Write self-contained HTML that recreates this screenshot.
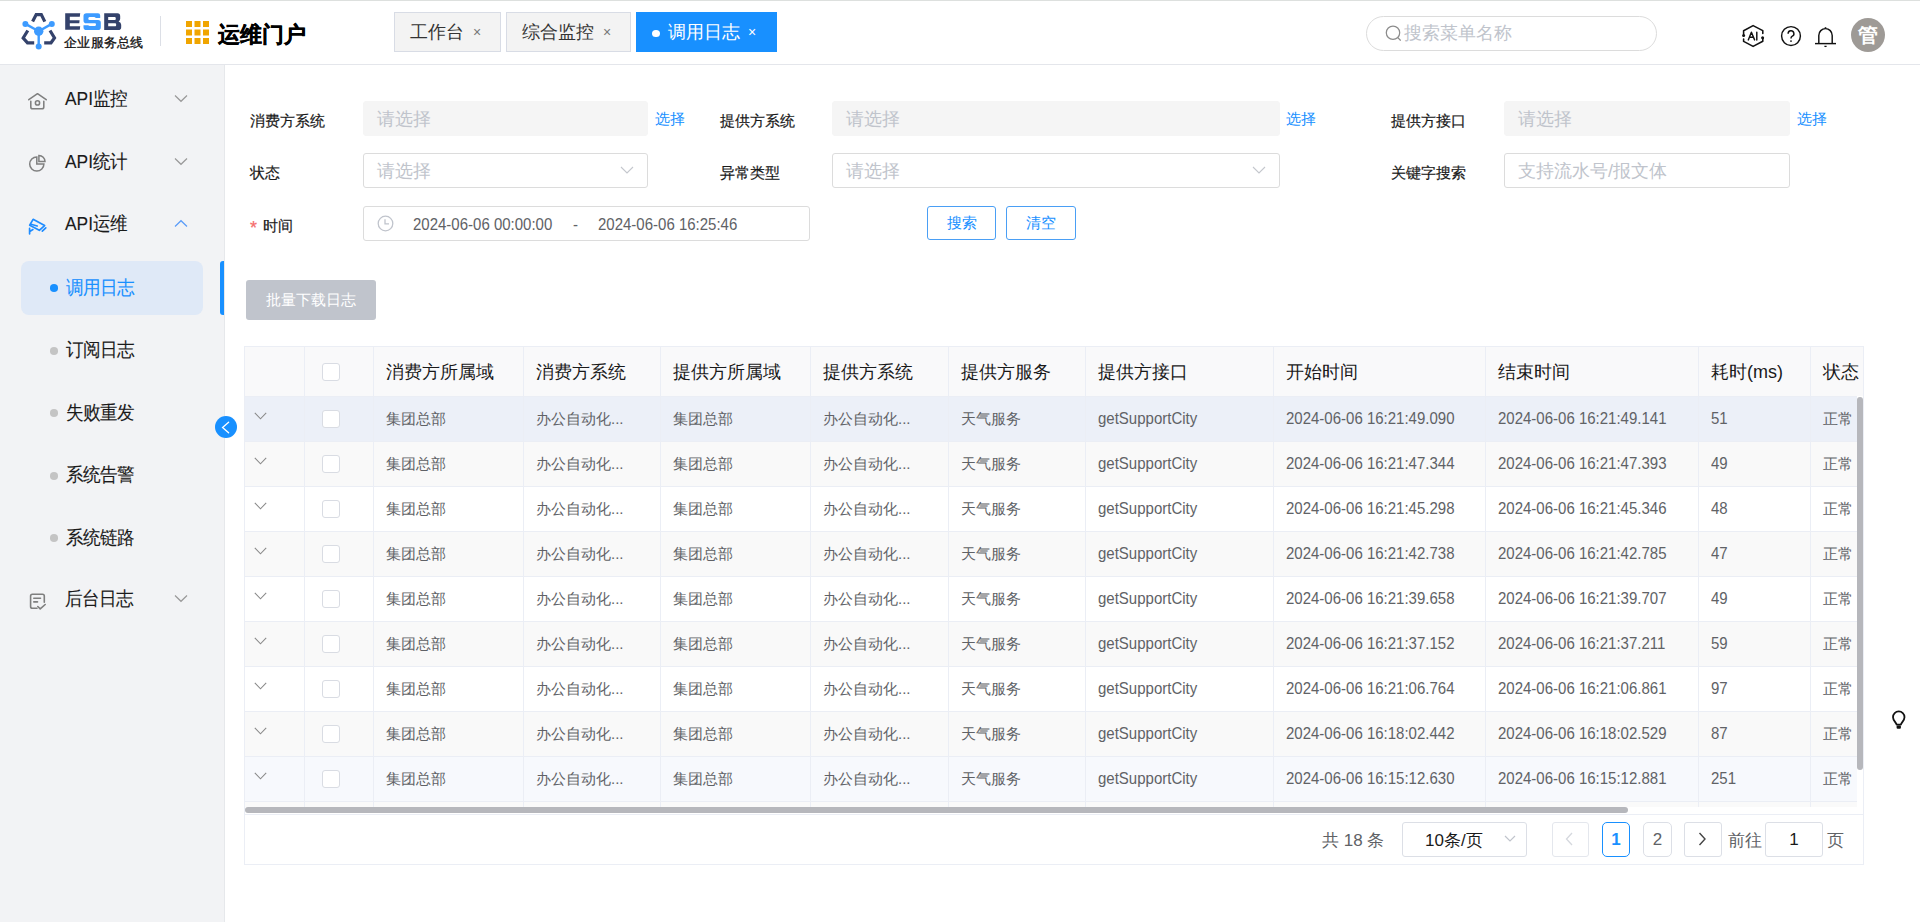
<!DOCTYPE html>
<html><head><meta charset="utf-8">
<style>
*{box-sizing:border-box;margin:0;padding:0}
html,body{width:1920px;height:922px;overflow:hidden;background:#fff;font-family:"Liberation Sans",sans-serif;color:#303133}
.a{position:absolute}
#topline{left:0;top:0;width:1920px;height:1px;background:#dde0de}
#header{left:0;top:0;width:1920px;height:65px;border-bottom:1px solid #e4e6eb}
#sidebar{left:0;top:65px;width:225px;height:857px;background:#f2f3f5;border-right:1px solid #e6e8eb}
.tab{top:12px;height:40px;border:1px solid #d8dce5;background:#f3f3f3;font-size:18px;color:#333;line-height:38px;white-space:nowrap}
.tab .x{position:absolute;top:0px;font-size:14px;color:#777}
.nav{position:absolute;left:65px;font-size:17.4px;transform:scaleY(1.08);color:#1a1a1a;white-space:nowrap;line-height:20px}
.sub{position:absolute;left:66px;font-size:17.4px;transform:scaleY(1.08);color:#1a1a1a;white-space:nowrap;line-height:20px}
.dot{position:absolute;left:50px;width:8px;height:7.5px;margin-top:0px;border-radius:50%;background:#c4c4c4}
.lbl{position:absolute;font-size:15px;color:#1a1a1a;white-space:nowrap;line-height:16px}
.inp{position:absolute;height:35px;border:1px solid #dcdcdc;border-radius:3px;background:#fff}
.inp.dis{background:#f5f5f5;border-color:#f5f5f5}
.ph{position:absolute;left:13px;top:7px;font-size:18px;color:#c0c4cc;white-space:nowrap;line-height:20px}
.lnk{position:absolute;font-size:15px;color:#1890ff;white-space:nowrap;line-height:16px}
.th{position:absolute;top:15px;font-size:18px;line-height:20px;color:#1a1a1a;white-space:nowrap}
.td{position:absolute;font-size:15px;line-height:18px;color:#606266;white-space:nowrap}
.num{transform:scaleY(1.06);transform-origin:0 14.5px}
.cb{position:absolute;width:18px;height:18px;border:1px solid #d9dce3;border-radius:3px;background:#fff}
.lbl{-webkit-text-stroke:0.2px currentColor}
.nav,.sub{-webkit-text-stroke:0.1px currentColor}

</style></head><body>
<div class="a" id="header"></div>
<div class="a" id="topline"></div>

<!-- logo -->
<svg class="a" style="left:20px;top:12px" width="38" height="38" viewBox="0 0 38 38">
  <g fill="none" stroke="#34426b" stroke-width="3.2" stroke-linejoin="miter">
    <path d="M12.6 9.6 L16.2 2.6 L21.3 2.6 L24.8 9.6"/>
    <path d="M7.8 18.5 L3.2 26 L7.5 30.8 L14.2 30.8"/>
    <path d="M30 18.5 L34.5 26 L31 30.8 L24.2 30.8"/>
  </g>
  <g stroke="#3d9bff" stroke-width="2.4" fill="#3d9bff">
    <line x1="5.4" y1="11.9" x2="18.7" y2="19.3"/>
    <line x1="31.8" y1="11.9" x2="18.7" y2="19.3"/>
    <line x1="18.7" y1="19.3" x2="18.7" y2="34.5"/>
    <circle cx="5.4" cy="11.9" r="3" stroke="none"/>
    <circle cx="31.8" cy="11.9" r="3" stroke="none"/>
    <circle cx="18.7" cy="19.3" r="4.7" stroke="none"/>
    <circle cx="18.7" cy="34.5" r="3" stroke="none"/>
  </g>
</svg>
<svg class="a" style="left:64px;top:12px" width="60" height="20" viewBox="0 0 60 20">
  <path fill="#34426b" d="M1.2 1.3 L16.2 1.3 L15.8 4.8 L5.8 4.8 L5.8 8.3 L15.6 8.3 L15.3 11.3 L5.8 11.3 L5.8 14.3 L16.2 14.3 L15.8 17.8 L1.2 17.8 Z"/>
  <path fill="#3d9bff" d="M22.5 1.2 L34 1.2 Q36.2 1.2 36.2 3.4 L36.2 6 L31.7 6 Q31.4 5 30 5 L25.5 5 Q24.3 5 24.3 6.5 Q24.3 8 25.5 8 L34 8 Q36.8 8 36.8 10.8 L36.8 15.2 Q36.8 18 34 18 L22.3 18 Q19.5 18 19.5 15.2 L19.5 13.2 L24.3 13.2 Q24.6 14 26 14 L31 14 Q32 14 32 12.6 Q32 11.2 31 11.2 L22.3 11.2 Q19.5 11.2 19.5 8.4 L19.5 4 Q19.5 1.2 22.5 1.2 Z"/>
  <path fill="#34426b" fill-rule="evenodd" d="M40.2 1.3 L53.5 1.3 Q56.2 1.3 56.2 4.2 L56.2 6.8 Q56.2 8.6 54.6 9.6 Q57.2 10.4 57.2 12.8 L57.2 15.2 Q57.2 18 54.3 18 L40.2 18 Z M44.2 5 L51 5 Q51.8 5 51.8 6.5 Q51.8 8 51 8 L44.2 8 Z M44.2 11.3 L51.4 11.3 Q52.2 11.3 52.2 12.8 Q52.2 14.3 51.4 14.3 L44.2 14.3 Z"/>
</svg>
<div class="a" style="left:64px;top:35px;font-size:13px;line-height:15px;letter-spacing:0.25px;color:#111;white-space:nowrap;-webkit-text-stroke:0.3px #111">企业服务总线</div>
<div class="a" style="left:160px;top:16px;width:1px;height:30px;background:#dcdfe6"></div>
<!-- grid icon -->
<svg class="a" style="left:186px;top:21px" width="23" height="23" viewBox="0 0 23 23" fill="#f0a500">
  <rect x="0" y="0" width="6" height="6"/><rect x="8.5" y="0" width="6" height="6"/><rect x="17" y="0" width="6" height="6"/>
  <rect x="0" y="8.5" width="6" height="6"/><rect x="8.5" y="8.5" width="6" height="6"/><rect x="17" y="8.5" width="6" height="6"/>
  <rect x="0" y="17" width="6" height="6"/><rect x="8.5" y="17" width="6" height="6"/><rect x="17" y="17" width="6" height="6"/>
</svg>
<div class="a" style="left:218px;top:22px;font-size:22px;font-weight:bold;line-height:26px;color:#000;white-space:nowrap;-webkit-text-stroke:0.35px #000">运维门户</div>

<!-- tabs -->
<div class="a tab" style="left:394px;width:107px;padding-left:15px">工作台<span class="x" style="left:78px">×</span></div>
<div class="a tab" style="left:506px;width:125px;padding-left:15px">综合监控<span class="x" style="left:96px">×</span></div>
<div class="a tab" style="left:636px;width:141px;background:#1890ff;border-color:#1890ff;color:#fff;padding-left:31px">调用日志<span class="x" style="left:111px;color:#fff">×</span>
  <span style="position:absolute;left:15px;top:16.5px;width:8px;height:7.5px;border-radius:50%;background:#fff"></span></div>

<!-- search -->
<div class="a" style="left:1366px;top:16px;width:291px;height:35px;border:1px solid #dcdcdc;border-radius:18px"></div>
<svg class="a" style="left:1384px;top:24px" width="20" height="20" viewBox="0 0 20 20" fill="none" stroke="#8c8c8c" stroke-width="1.25"><circle cx="9" cy="8.7" r="6.7"/><path d="M13.8 13.6 L16.4 16.2" stroke-linecap="round"/></svg>
<div class="a" style="left:1404px;top:23px;font-size:18px;line-height:20px;color:#c0c4cc;white-space:nowrap">搜索菜单名称</div>

<!-- header icons -->
<svg class="a" style="left:1741px;top:24px" width="24" height="24" viewBox="0 0 24 24" fill="none" stroke="#111" stroke-width="1.55" stroke-linejoin="round" stroke-linecap="round">
  <path d="M2.6 10.4 L2.6 6.8 L12.1 1.6 L21.8 6.6 L21.8 9.4"/>
  <path d="M21.8 13.9 L21.8 17.2 L12.1 22.4 L2.6 17.4 L2.6 14.9"/>
  <circle cx="2.6" cy="11.4" r="1.5" fill="#111" stroke="none"/><circle cx="21.6" cy="13.7" r="1.5" fill="#111" stroke="none"/>
  <path d="M7.3 15.9 L10.4 8.2 L13.6 15.9 M8.5 13.2 L12.5 13.2 M15.8 8.2 L15.8 15.9" stroke-width="1.45"/>
</svg>
<svg class="a" style="left:1780px;top:25px" width="22" height="22" viewBox="0 0 22 22" fill="none" stroke="#111" stroke-width="1.45">
  <circle cx="11" cy="11" r="9.4"/>
  <path d="M8.1 8.7 A2.9 2.9 0 1 1 12 11.4 C11.1 11.9 11 12.5 11 13.6"/>
  <circle cx="11" cy="16.1" r="0.9" fill="#111" stroke="none"/>
</svg>
<svg class="a" style="left:1814px;top:26px" width="23" height="23" viewBox="0 0 23 23" fill="none" stroke="#111" stroke-width="1.45">
  <path d="M4.8 17.3 L4.8 9.5 A6.7 6.9 0 0 1 18.2 9.5 L18.2 17.3"/>
  <path d="M11.5 2.3 L11.5 1.2" stroke-width="1.6"/>
  <line x1="1" y1="17.6" x2="22" y2="17.6"/>
  <line x1="10.4" y1="20.4" x2="12.6" y2="20.4" stroke-width="1.3"/>
</svg>
<div class="a" style="left:1851px;top:18px;width:34px;height:34px;border-radius:50%;background:#9e9a96;color:#fff;font-size:20px;font-weight:bold;text-align:center;line-height:34px">管</div>

<!-- sidebar -->
<div class="a" id="sidebar"></div>
<!-- nav icons -->
<svg class="a" style="left:28px;top:92px" width="19" height="19" viewBox="0 0 19 19" fill="none" stroke="#7f7f7f" stroke-width="1.55" stroke-linecap="round" stroke-linejoin="round">
  <path d="M0.8 7.7 L9.5 1.7 L18.2 7.7"/><path d="M2.8 9.3 L2.8 15 Q2.8 16.8 4.6 16.8 L14 16.8 Q15.8 16.8 15.8 15 L15.8 9.3"/><circle cx="9.5" cy="10.9" r="2.1"/>
</svg>
<div class="nav" style="top:89px">API监控</div>
<svg class="a" style="left:174px;top:94px" width="14" height="9" viewBox="0 0 14 9" fill="none" stroke="#999" stroke-width="1.2"><path d="M1 1.5 L7 7.3 L13 1.5"/></svg>

<svg class="a" style="left:28px;top:154px" width="19" height="19" viewBox="0 0 19 19" fill="none" stroke="#7f7f7f" stroke-width="1.5" stroke-linejoin="miter">
  <path d="M8.8 2.9 L8.8 10 L15.9 10 A7.1 7.1 0 1 1 8.8 2.9 Z"/><path d="M10.9 1.4 L10.9 7.5 L17 7.5 A6.1 6.1 0 0 0 10.9 1.4 Z"/>
</svg>
<div class="nav" style="top:152px">API统计</div>
<svg class="a" style="left:174px;top:157px" width="14" height="9" viewBox="0 0 14 9" fill="none" stroke="#999" stroke-width="1.2"><path d="M1 1.5 L7 7.3 L13 1.5"/></svg>

<svg class="a" style="left:28px;top:216px" width="20" height="20" viewBox="0 0 20 20" fill="none" stroke="#1f8cff" stroke-width="1.7" stroke-linejoin="round" stroke-linecap="round">
  <path d="M5.1 3.3 L16.6 9.6 L11.3 14.3 L1.7 9.2 Z"/><path d="M3 8.3 L9.2 10"/><path d="M14.3 15.2 L17.8 11.8"/><path d="M1.6 12.4 L1.6 17.8 M1.8 15.4 L4.9 13.6"/>
</svg>
<div class="nav" style="top:214px">API运维</div>
<svg class="a" style="left:174px;top:219px" width="14" height="9" viewBox="0 0 14 9" fill="none" stroke="#5a9cf8" stroke-width="1.2"><path d="M1 7.5 L7 1.7 L13 7.5"/></svg>

<div class="a" style="left:21px;top:261px;width:182px;height:54px;border-radius:8px;background:#dfe9f7"></div>
<div class="a" style="left:220px;top:261px;width:4px;height:54px;border-radius:3px 0 0 3px;background:#1890ff"></div>
<div class="dot" style="top:284px;background:#1890ff"></div>
<div class="sub" style="top:278px;color:#1890ff">调用日志</div>
<div class="dot" style="top:347px"></div>
<div class="sub" style="top:340px">订阅日志</div>
<div class="dot" style="top:409px"></div>
<div class="sub" style="top:403px">失败重发</div>
<div class="dot" style="top:472px"></div>
<div class="sub" style="top:465px">系统告警</div>
<div class="dot" style="top:534px"></div>
<div class="sub" style="top:528px">系统链路</div>

<svg class="a" style="left:28px;top:591px" width="19" height="20" viewBox="0 0 19 20" fill="none" stroke="#7f7f7f" stroke-width="1.6" stroke-linecap="round" stroke-linejoin="round">
  <path d="M9 17.2 L4.4 17.2 Q2.6 17.2 2.6 15.4 L2.6 5.1 Q2.6 3.3 4.4 3.3 L14.5 3.3 Q16.3 3.3 16.3 5.1 L16.3 11.2"/><path d="M5.8 7.3 L12.5 7.3 M5.8 10.9 L9.5 10.9"/><path d="M9.8 15.5 L12.2 17.9 L17.2 13.5"/>
</svg>
<div class="nav" style="top:589px">后台日志</div>
<svg class="a" style="left:174px;top:594px" width="14" height="9" viewBox="0 0 14 9" fill="none" stroke="#999" stroke-width="1.2"><path d="M1 1.5 L7 7.3 L13 1.5"/></svg>

<div class="a" style="left:215px;top:416px;width:22px;height:22px;border-radius:50%;background:#1890ff"></div>
<svg class="a" style="left:215px;top:416px" width="22" height="22" viewBox="0 0 22 22" fill="none" stroke="#fff" stroke-width="1.35" stroke-linecap="round"><path d="M13.6 6.3 L7.6 11.5 L13.6 16.7"/></svg>

<!-- form -->
<div class="lbl" style="left:250px;top:113px">消费方系统</div>
<div class="inp dis" style="left:363px;top:101px;width:285px"><div class="ph">请选择</div></div>
<div class="lnk" style="left:655px;top:111px">选择</div>
<div class="lbl" style="left:720px;top:113px">提供方系统</div>
<div class="inp dis" style="left:832px;top:101px;width:448px"><div class="ph">请选择</div></div>
<div class="lnk" style="left:1286px;top:111px">选择</div>
<div class="lbl" style="left:1391px;top:113px">提供方接口</div>
<div class="inp dis" style="left:1504px;top:101px;width:286px"><div class="ph">请选择</div></div>
<div class="lnk" style="left:1797px;top:111px">选择</div>

<div class="lbl" style="left:250px;top:165px">状态</div>
<div class="inp" style="left:363px;top:153px;width:285px"><div class="ph">请选择</div>
  <svg style="position:absolute;left:256px;top:11px" width="14" height="10" viewBox="0 0 14 10" fill="none" stroke="#c4c7cd" stroke-width="1.1"><path d="M1 2 L7 8 L13 2"/></svg></div>
<div class="lbl" style="left:720px;top:165px">异常类型</div>
<div class="inp" style="left:832px;top:153px;width:448px"><div class="ph">请选择</div>
  <svg style="position:absolute;left:419px;top:11px" width="14" height="10" viewBox="0 0 14 10" fill="none" stroke="#c4c7cd" stroke-width="1.1"><path d="M1 2 L7 8 L13 2"/></svg></div>
<div class="lbl" style="left:1391px;top:165px">关键字搜索</div>
<div class="inp" style="left:1504px;top:153px;width:286px"><div class="ph">支持流水号/报文体</div></div>

<div class="lbl" style="left:250px;top:219px;color:#f56c6c;font-size:18px;line-height:18px">*</div><div class="lbl" style="left:263px;top:218px">时间</div>
<div class="inp" style="left:363px;top:206px;width:447px">
  <svg style="position:absolute;left:13px;top:8px" width="17" height="17" viewBox="0 0 17 17" fill="none" stroke="#c0c4cc" stroke-width="1.3"><circle cx="8.5" cy="8.5" r="7.3"/><path d="M8 4.3 L8 8.8 L12 8.8"/></svg>
  <div style="position:absolute;left:49px;top:8.7px;font-size:15px;line-height:18px;transform:scaleY(1.08);transform-origin:0 14.5px;color:#606266;white-space:nowrap">2024-06-06 00:00:00</div>
  <div style="position:absolute;left:209px;top:8.7px;font-size:15px;line-height:18px;transform:scaleY(1.08);transform-origin:0 14.5px;color:#606266">-</div>
  <div style="position:absolute;left:234px;top:8.7px;font-size:15px;line-height:18px;transform:scaleY(1.08);transform-origin:0 14.5px;color:#606266;white-space:nowrap">2024-06-06 16:25:46</div>
</div>
<div class="a btn" style="left:927px;top:206px;width:69px;height:34px;border:1px solid #4a9ff5;border-radius:3px;color:#1890ff;font-size:15px;line-height:32px;text-align:center">搜索</div>
<div class="a btn" style="left:1006px;top:206px;width:70px;height:34px;border:1px solid #4a9ff5;border-radius:3px;color:#1890ff;font-size:15px;line-height:32px;text-align:center">清空</div>

<div class="a" style="left:246px;top:280px;width:130px;height:40px;border-radius:3px;background:#c0c4cc;color:#fff;font-size:15px;line-height:40px;text-align:center">批量下载日志</div>
<!-- table -->
<div class="a" style="left:244px;top:346px;width:1620px;height:519px;border:1px solid #ebeef5;background:#fff"></div>
<div class="a" style="left:245px;top:347px;width:1618px;height:49px;overflow:hidden;background:#f9f9fa">
<div class="a" style="left:59px;top:0;width:1px;height:49px;background:#ebeef5"></div>
<div class="a" style="left:128px;top:0;width:1px;height:49px;background:#ebeef5"></div>
<div class="a" style="left:278px;top:0;width:1px;height:49px;background:#ebeef5"></div>
<div class="a" style="left:415px;top:0;width:1px;height:49px;background:#ebeef5"></div>
<div class="a" style="left:565px;top:0;width:1px;height:49px;background:#ebeef5"></div>
<div class="a" style="left:703px;top:0;width:1px;height:49px;background:#ebeef5"></div>
<div class="a" style="left:840px;top:0;width:1px;height:49px;background:#ebeef5"></div>
<div class="a" style="left:1028px;top:0;width:1px;height:49px;background:#ebeef5"></div>
<div class="a" style="left:1240px;top:0;width:1px;height:49px;background:#ebeef5"></div>
<div class="a" style="left:1453px;top:0;width:1px;height:49px;background:#ebeef5"></div>
<div class="a" style="left:1565px;top:0;width:1px;height:49px;background:#ebeef5"></div>
<div class="th" style="left:141px">消费方所属域</div>
<div class="th" style="left:291px">消费方系统</div>
<div class="th" style="left:428px">提供方所属域</div>
<div class="th" style="left:578px">提供方系统</div>
<div class="th" style="left:716px">提供方服务</div>
<div class="th" style="left:853px">提供方接口</div>
<div class="th" style="left:1041px">开始时间</div>
<div class="th" style="left:1253px">结束时间</div>
<div class="th" style="left:1466px">耗时(ms)</div>
<div class="th" style="left:1578px">状态</div>
<div class="cb" style="left:77px;top:16px"></div>
</div>
<div class="a" style="left:245px;top:347px;width:1612px;height:460px;overflow:hidden">
<div class="a" style="left:0;top:49px;width:1620px;height:1px;background:#ebeef5"></div>
<div class="a" style="left:0;top:50px;width:1620px;height:45px;background:#ecf0f8;border-bottom:1px solid #ebeef5"></div>
<div class="a" style="left:0;top:95px;width:1620px;height:45px;background:#f9f9f9;border-bottom:1px solid #ebeef5"></div>
<div class="a" style="left:0;top:140px;width:1620px;height:45px;background:#fff;border-bottom:1px solid #ebeef5"></div>
<div class="a" style="left:0;top:185px;width:1620px;height:45px;background:#f9f9f9;border-bottom:1px solid #ebeef5"></div>
<div class="a" style="left:0;top:230px;width:1620px;height:45px;background:#fff;border-bottom:1px solid #ebeef5"></div>
<div class="a" style="left:0;top:275px;width:1620px;height:45px;background:#f9f9f9;border-bottom:1px solid #ebeef5"></div>
<div class="a" style="left:0;top:320px;width:1620px;height:45px;background:#fff;border-bottom:1px solid #ebeef5"></div>
<div class="a" style="left:0;top:365px;width:1620px;height:45px;background:#f9f9f9;border-bottom:1px solid #ebeef5"></div>
<div class="a" style="left:0;top:410px;width:1620px;height:45px;background:#f7f9fd;border-bottom:1px solid #ebeef5"></div>
<div class="a" style="left:0;top:455px;width:1620px;height:45px;background:#fafafa"></div>
<div class="a" style="left:59px;top:49px;width:1px;height:411px;background:#ebeef5"></div>
<div class="a" style="left:128px;top:49px;width:1px;height:411px;background:#ebeef5"></div>
<div class="a" style="left:278px;top:49px;width:1px;height:411px;background:#ebeef5"></div>
<div class="a" style="left:415px;top:49px;width:1px;height:411px;background:#ebeef5"></div>
<div class="a" style="left:565px;top:49px;width:1px;height:411px;background:#ebeef5"></div>
<div class="a" style="left:703px;top:49px;width:1px;height:411px;background:#ebeef5"></div>
<div class="a" style="left:840px;top:49px;width:1px;height:411px;background:#ebeef5"></div>
<div class="a" style="left:1028px;top:49px;width:1px;height:411px;background:#ebeef5"></div>
<div class="a" style="left:1240px;top:49px;width:1px;height:411px;background:#ebeef5"></div>
<div class="a" style="left:1453px;top:49px;width:1px;height:411px;background:#ebeef5"></div>
<div class="a" style="left:1565px;top:49px;width:1px;height:411px;background:#ebeef5"></div>
<svg class="a" style="left:9px;top:65px" width="13" height="8" viewBox="0 0 13 8" fill="none" stroke="#8a8a8a" stroke-width="1.1"><path d="M0.8 0.8 L6.5 6.8 L12.2 0.8"/></svg>
<div class="cb" style="left:77px;top:63px"></div>
<div class="td" style="left:141px;top:63px">集团总部</div>
<div class="td" style="left:291px;top:63px">办公自动化...</div>
<div class="td" style="left:428px;top:63px">集团总部</div>
<div class="td" style="left:578px;top:63px">办公自动化...</div>
<div class="td" style="left:716px;top:63px">天气服务</div>
<div class="td num" style="left:853px;top:63px">getSupportCity</div>
<div class="td num" style="left:1041px;top:63px">2024-06-06 16:21:49.090</div>
<div class="td num" style="left:1253px;top:63px">2024-06-06 16:21:49.141</div>
<div class="td num" style="left:1466px;top:63px">51</div>
<div class="td" style="left:1578px;top:63px">正常</div>
<svg class="a" style="left:9px;top:110px" width="13" height="8" viewBox="0 0 13 8" fill="none" stroke="#8a8a8a" stroke-width="1.1"><path d="M0.8 0.8 L6.5 6.8 L12.2 0.8"/></svg>
<div class="cb" style="left:77px;top:108px"></div>
<div class="td" style="left:141px;top:108px">集团总部</div>
<div class="td" style="left:291px;top:108px">办公自动化...</div>
<div class="td" style="left:428px;top:108px">集团总部</div>
<div class="td" style="left:578px;top:108px">办公自动化...</div>
<div class="td" style="left:716px;top:108px">天气服务</div>
<div class="td num" style="left:853px;top:108px">getSupportCity</div>
<div class="td num" style="left:1041px;top:108px">2024-06-06 16:21:47.344</div>
<div class="td num" style="left:1253px;top:108px">2024-06-06 16:21:47.393</div>
<div class="td num" style="left:1466px;top:108px">49</div>
<div class="td" style="left:1578px;top:108px">正常</div>
<svg class="a" style="left:9px;top:155px" width="13" height="8" viewBox="0 0 13 8" fill="none" stroke="#8a8a8a" stroke-width="1.1"><path d="M0.8 0.8 L6.5 6.8 L12.2 0.8"/></svg>
<div class="cb" style="left:77px;top:153px"></div>
<div class="td" style="left:141px;top:153px">集团总部</div>
<div class="td" style="left:291px;top:153px">办公自动化...</div>
<div class="td" style="left:428px;top:153px">集团总部</div>
<div class="td" style="left:578px;top:153px">办公自动化...</div>
<div class="td" style="left:716px;top:153px">天气服务</div>
<div class="td num" style="left:853px;top:153px">getSupportCity</div>
<div class="td num" style="left:1041px;top:153px">2024-06-06 16:21:45.298</div>
<div class="td num" style="left:1253px;top:153px">2024-06-06 16:21:45.346</div>
<div class="td num" style="left:1466px;top:153px">48</div>
<div class="td" style="left:1578px;top:153px">正常</div>
<svg class="a" style="left:9px;top:200px" width="13" height="8" viewBox="0 0 13 8" fill="none" stroke="#8a8a8a" stroke-width="1.1"><path d="M0.8 0.8 L6.5 6.8 L12.2 0.8"/></svg>
<div class="cb" style="left:77px;top:198px"></div>
<div class="td" style="left:141px;top:198px">集团总部</div>
<div class="td" style="left:291px;top:198px">办公自动化...</div>
<div class="td" style="left:428px;top:198px">集团总部</div>
<div class="td" style="left:578px;top:198px">办公自动化...</div>
<div class="td" style="left:716px;top:198px">天气服务</div>
<div class="td num" style="left:853px;top:198px">getSupportCity</div>
<div class="td num" style="left:1041px;top:198px">2024-06-06 16:21:42.738</div>
<div class="td num" style="left:1253px;top:198px">2024-06-06 16:21:42.785</div>
<div class="td num" style="left:1466px;top:198px">47</div>
<div class="td" style="left:1578px;top:198px">正常</div>
<svg class="a" style="left:9px;top:245px" width="13" height="8" viewBox="0 0 13 8" fill="none" stroke="#8a8a8a" stroke-width="1.1"><path d="M0.8 0.8 L6.5 6.8 L12.2 0.8"/></svg>
<div class="cb" style="left:77px;top:243px"></div>
<div class="td" style="left:141px;top:243px">集团总部</div>
<div class="td" style="left:291px;top:243px">办公自动化...</div>
<div class="td" style="left:428px;top:243px">集团总部</div>
<div class="td" style="left:578px;top:243px">办公自动化...</div>
<div class="td" style="left:716px;top:243px">天气服务</div>
<div class="td num" style="left:853px;top:243px">getSupportCity</div>
<div class="td num" style="left:1041px;top:243px">2024-06-06 16:21:39.658</div>
<div class="td num" style="left:1253px;top:243px">2024-06-06 16:21:39.707</div>
<div class="td num" style="left:1466px;top:243px">49</div>
<div class="td" style="left:1578px;top:243px">正常</div>
<svg class="a" style="left:9px;top:290px" width="13" height="8" viewBox="0 0 13 8" fill="none" stroke="#8a8a8a" stroke-width="1.1"><path d="M0.8 0.8 L6.5 6.8 L12.2 0.8"/></svg>
<div class="cb" style="left:77px;top:288px"></div>
<div class="td" style="left:141px;top:288px">集团总部</div>
<div class="td" style="left:291px;top:288px">办公自动化...</div>
<div class="td" style="left:428px;top:288px">集团总部</div>
<div class="td" style="left:578px;top:288px">办公自动化...</div>
<div class="td" style="left:716px;top:288px">天气服务</div>
<div class="td num" style="left:853px;top:288px">getSupportCity</div>
<div class="td num" style="left:1041px;top:288px">2024-06-06 16:21:37.152</div>
<div class="td num" style="left:1253px;top:288px">2024-06-06 16:21:37.211</div>
<div class="td num" style="left:1466px;top:288px">59</div>
<div class="td" style="left:1578px;top:288px">正常</div>
<svg class="a" style="left:9px;top:335px" width="13" height="8" viewBox="0 0 13 8" fill="none" stroke="#8a8a8a" stroke-width="1.1"><path d="M0.8 0.8 L6.5 6.8 L12.2 0.8"/></svg>
<div class="cb" style="left:77px;top:333px"></div>
<div class="td" style="left:141px;top:333px">集团总部</div>
<div class="td" style="left:291px;top:333px">办公自动化...</div>
<div class="td" style="left:428px;top:333px">集团总部</div>
<div class="td" style="left:578px;top:333px">办公自动化...</div>
<div class="td" style="left:716px;top:333px">天气服务</div>
<div class="td num" style="left:853px;top:333px">getSupportCity</div>
<div class="td num" style="left:1041px;top:333px">2024-06-06 16:21:06.764</div>
<div class="td num" style="left:1253px;top:333px">2024-06-06 16:21:06.861</div>
<div class="td num" style="left:1466px;top:333px">97</div>
<div class="td" style="left:1578px;top:333px">正常</div>
<svg class="a" style="left:9px;top:380px" width="13" height="8" viewBox="0 0 13 8" fill="none" stroke="#8a8a8a" stroke-width="1.1"><path d="M0.8 0.8 L6.5 6.8 L12.2 0.8"/></svg>
<div class="cb" style="left:77px;top:378px"></div>
<div class="td" style="left:141px;top:378px">集团总部</div>
<div class="td" style="left:291px;top:378px">办公自动化...</div>
<div class="td" style="left:428px;top:378px">集团总部</div>
<div class="td" style="left:578px;top:378px">办公自动化...</div>
<div class="td" style="left:716px;top:378px">天气服务</div>
<div class="td num" style="left:853px;top:378px">getSupportCity</div>
<div class="td num" style="left:1041px;top:378px">2024-06-06 16:18:02.442</div>
<div class="td num" style="left:1253px;top:378px">2024-06-06 16:18:02.529</div>
<div class="td num" style="left:1466px;top:378px">87</div>
<div class="td" style="left:1578px;top:378px">正常</div>
<svg class="a" style="left:9px;top:425px" width="13" height="8" viewBox="0 0 13 8" fill="none" stroke="#8a8a8a" stroke-width="1.1"><path d="M0.8 0.8 L6.5 6.8 L12.2 0.8"/></svg>
<div class="cb" style="left:77px;top:423px"></div>
<div class="td" style="left:141px;top:423px">集团总部</div>
<div class="td" style="left:291px;top:423px">办公自动化...</div>
<div class="td" style="left:428px;top:423px">集团总部</div>
<div class="td" style="left:578px;top:423px">办公自动化...</div>
<div class="td" style="left:716px;top:423px">天气服务</div>
<div class="td num" style="left:853px;top:423px">getSupportCity</div>
<div class="td num" style="left:1041px;top:423px">2024-06-06 16:15:12.630</div>
<div class="td num" style="left:1253px;top:423px">2024-06-06 16:15:12.881</div>
<div class="td num" style="left:1466px;top:423px">251</div>
<div class="td" style="left:1578px;top:423px">正常</div>
</div>
<div class="a" style="left:245px;top:807px;width:1383px;height:6px;border-radius:3px;background:#b6b7bc"></div>
<div class="a" style="left:245px;top:814px;width:1618px;height:1px;background:#ebeef5"></div>
<div class="a" style="left:1857px;top:397px;width:6px;height:373px;border-radius:3px;background:#b6b7bc"></div>
<div class="a" style="left:1322px;top:831px;font-size:17px;line-height:20px;color:#606266;white-space:nowrap">共 18 条</div>
<div class="a" style="left:1402px;top:822px;width:125px;height:35px;border:1px solid #dcdfe6;border-radius:3px"></div>
<div class="a" style="left:1425px;top:831px;font-size:17px;line-height:20px;color:#1a1a1a;white-space:nowrap">10条/页</div>
<svg class="a" style="left:1504px;top:835px" width="12" height="8" viewBox="0 0 12 8" fill="none" stroke="#c0c4cc" stroke-width="1.2"><path d="M1 1 L6 6 L11 1"/></svg>
<div class="a" style="left:1552px;top:822px;width:37px;height:35px;border:1px solid #e4e7ed;border-radius:3px"></div>
<svg class="a" style="left:1565px;top:832px" width="9" height="14" viewBox="0 0 9 14" fill="none" stroke="#d5d8de" stroke-width="1.3"><path d="M7 1 L1.5 7 L7 13"/></svg>
<div class="a" style="left:1602px;top:822px;width:28px;height:35px;border:1px solid #1890ff;border-radius:5px;color:#1890ff;font-size:17px;font-weight:bold;line-height:33px;text-align:center">1</div>
<div class="a" style="left:1643px;top:822px;width:29px;height:35px;border:1px solid #dcdfe6;border-radius:5px;color:#606266;font-size:17px;line-height:33px;text-align:center">2</div>
<div class="a" style="left:1684px;top:822px;width:38px;height:35px;border:1px solid #dcdfe6;border-radius:3px"></div>
<svg class="a" style="left:1698px;top:832px" width="9" height="14" viewBox="0 0 9 14" fill="none" stroke="#444" stroke-width="1.4"><path d="M1.5 1 L7 7 L1.5 13"/></svg>
<div class="a" style="left:1728px;top:831px;font-size:17px;line-height:20px;color:#606266;white-space:nowrap">前往</div>
<div class="a" style="left:1765px;top:822px;width:58px;height:35px;border:1px solid #dcdfe6;border-radius:3px;color:#1a1a1a;font-size:17px;line-height:33px;text-align:center">1</div>
<div class="a" style="left:1827px;top:831px;font-size:17px;line-height:20px;color:#606266;white-space:nowrap">页</div>
<!-- bulb -->
<svg class="a" style="left:1890px;top:709px" width="18" height="21" viewBox="0 0 18 21" fill="none" stroke="#111" stroke-width="1.8">
  <path d="M6.6 15.6 C6.4 13.6 3 11.8 3 8.2 A5.75 5.75 0 0 1 14.5 8.2 C14.5 11.8 11.1 13.6 10.9 15.6 Z" stroke-linejoin="round"/>
  <rect x="6.6" y="16.6" width="4.3" height="3.2" rx="1" fill="#111" stroke="none"/>
</svg>

</body></html>
